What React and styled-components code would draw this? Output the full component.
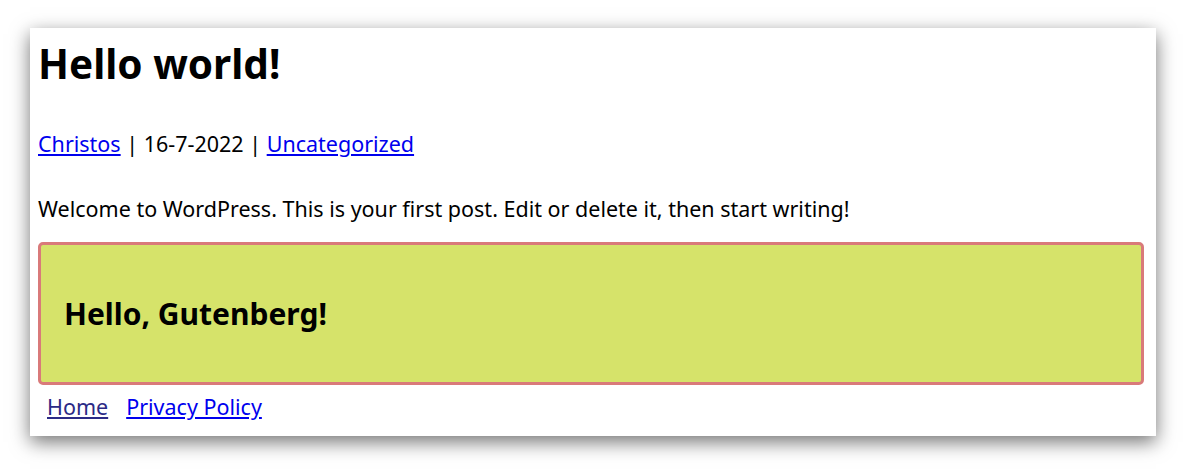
import React from "react";
import styled, { createGlobalStyle } from "styled-components";

const GlobalStyle = createGlobalStyle`
  body{
    margin: 0;
    background: #ffffff;
    font-family: "Noto Sans", "Open Sans", sans-serif;
  }
`
const Page = styled.div`
  padding: 28px 30px 33px 30px;
`
const Card = styled.article`
  background: #ffffff;
  height: 408px;
  box-sizing: border-box;
  padding: 0 12px 0 8px;
  box-shadow: 0 6px 18px rgba(0, 0, 0, 0.55);
  display: flex;
  flex-direction: column;
`
const Title = styled.h1`
  margin: 8px 0 0 0;
  font-size: 40.5px;
  line-height: 56px;
  font-weight: 700;
  color: #000;
`
const Meta = styled.p`
  margin: 38px 0 0 0;
  font-size: 21.5px;
  line-height: 28px;
  color: #000;
  a{
    color: #0000ee;
  }
`
const Text = styled.p`
  margin: 37px 0 0 0;
  font-size: 21.5px;
  line-height: 28px;
  color: #000;
`
const Highlight = styled.div`
  margin-top: 19px;
  height: 143px;
  box-sizing: border-box;
  border: 3px solid #d97a7a;
  border-radius: 5px;
  background: #d6e36a;
  padding: 0 23px;
  display: flex;
  align-items: center;
  h2{
    margin: 0;
    font-size: 30px;
    font-weight: 700;
    color: #000;
  }
`
const Footer = styled.nav`
  display: flex;
  gap: 18px;
  padding: 8px 9px 0 9px;
  font-size: 21.5px;
  line-height: 28px;
`
const NavLink = styled.a`
  color: ${(p) => (p.$visited ? "#2b2a86" : "#0000ee")};
`

const App = () => {
  return (
    <Page>
      <GlobalStyle />
      <Card>
        <Title>Hello world!</Title>
        <Meta>
          <a href="#author">Christos</a> | 16-7-2022 | <a href="#category">Uncategorized</a>
        </Meta>
        <Text>Welcome to WordPress. This is your first post. Edit or delete it, then start writing!</Text>
        <Highlight>
          <h2>Hello, Gutenberg!</h2>
        </Highlight>
        <Footer>
          <NavLink href="#home" $visited>Home</NavLink>
          <NavLink href="#privacy">Privacy Policy</NavLink>
        </Footer>
      </Card>
    </Page>
  );
}

export default App;
